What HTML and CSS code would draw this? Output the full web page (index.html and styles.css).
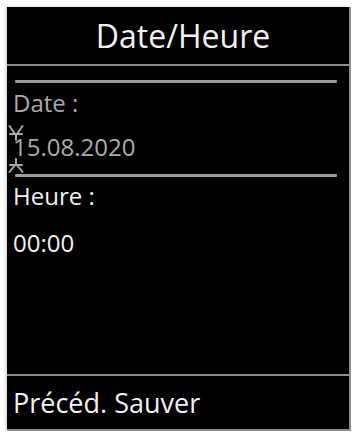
FILE: index.html
```html
<!DOCTYPE html>
<html lang="fr">
<head>
<meta charset="utf-8">
<title>Date/Heure</title>
<link rel="stylesheet" href="styles.css">
</head>
<body>
<div class="screen">
  <div class="header">Date/Heure</div>
  <div class="content">
    <div class="bar"></div>
    <div class="field">
      <div class="label dim">Date :</div>
      <div class="value dim">15.08.2020
        <svg class="cursor" width="16" height="50" viewBox="0 0 16 50">
          <g stroke="#a8a8a8" stroke-width="2" fill="none" stroke-linecap="round">
            <line x1="1.5" y1="2" x2="7" y2="10"/>
            <line x1="14.5" y1="2" x2="9" y2="10"/>
            <line x1="2" y1="10" x2="14" y2="10"/>
            <line x1="8" y1="10" x2="8" y2="16"/>
            <line x1="8" y1="35" x2="8" y2="41"/>
            <line x1="2" y1="41" x2="14" y2="41"/>
            <line x1="7" y1="41" x2="1.5" y2="48"/>
            <line x1="9" y1="41" x2="14.5" y2="48"/>
          </g>
        </svg>
      </div>
    </div>
    <div class="bar bar2"></div>
    <div class="label">Heure :</div>
    <div class="value2">00:00</div>
  </div>
  <div class="footer">Précéd. Sauver</div>
</div>
</body>
</html>
```

FILE: styles.css
```css
html, body {
  margin: 0;
  padding: 0;
  background: #ffffff;
}
body {
  width: 354px;
  height: 432px;
  overflow: hidden;
  font-family: "Open Sans", "DejaVu Sans", sans-serif;
}
.screen {
  margin: 7px 0 0 7px;
  width: 342px;
  height: 422px;
  background: #000;
  border-right: 2px solid #8c8c8c;
  border-bottom: 2px solid #8c8c8c;
  box-shadow: -2px -1px 2px rgba(0,0,0,0.12);
  display: flex;
  flex-direction: column;
  color: #f2f2f2;
}
.header {
  height: 57px;
  line-height: 57px;
  font-size: 32px;
  text-align: center;
  padding-left: 10px;
  border-bottom: 2px solid #8c8c8c;
  flex: none;
}
.content {
  flex: 1;
  padding: 14px 12px 0 6px;
  font-size: 24px;
}
.bar {
  height: 3px;
  background: #9c9c9c;
  margin-left: 2px;
  border-radius: 1px;
}
.bar2 {
  margin-top: 3px;
}
.label {
  line-height: 40px;
}
.label:not(.dim) {
  line-height: 38px;
}
.dim {
  color: #ababab;
}
.field {
  position: relative;
}
.value {
  line-height: 48px;
  position: relative;
}
.cursor {
  position: absolute;
  left: -5px;
  top: 1px;
}
.value2 {
  line-height: 56px;
}
.footer {
  flex: none;
  height: 53px;
  line-height: 53px;
  font-size: 27px;
  padding-left: 6px;
  border-top: 2px solid #8c8c8c;
}
```
